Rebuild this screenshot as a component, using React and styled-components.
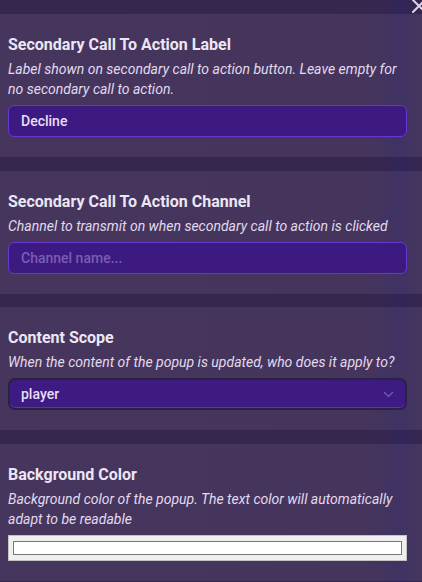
import React from "react";
import styled, { createGlobalStyle } from "styled-components";

const GlobalStyle = createGlobalStyle`
  html, body {
    margin: 0;
    padding: 0;
    background: #36274e;
    font-family: Roboto, "Noto Sans", sans-serif;
  }
  * {
    box-sizing: border-box;
  }
`;

const Panel = styled.div`
  position: relative;
  width: 422px;
  height: 582px;
  overflow: hidden;
  background: linear-gradient(90deg, #36274e 0%, #36274e 90%, #31265a 95%, #36274e 100%);
  padding-top: 14px;
  display: flex;
  flex-direction: column;
  gap: 13.5px;
`;

const CloseButton = styled.button`
  position: absolute;
  top: -3px;
  right: -6px;
  width: 18px;
  height: 18px;
  padding: 0;
  border: none;
  background: transparent;
  color: #ddd4ea;
  cursor: pointer;
  svg {
    display: block;
  }
`;

const Card = styled.section`
  background: linear-gradient(
    90deg,
    #46365d 0%,
    #45355d 88%,
    #403263 94%,
    #45365e 100%
  );
  padding: 21px 15px 20px 8px;
  display: flex;
  flex-direction: column;
`;

const Title = styled.h3`
  margin: 0;
  font-size: 16px;
  line-height: 20px;
  font-weight: 700;
  color: #ece6f4;
`;

const Description = styled.p`
  margin: 4px 0 6px;
  font-size: 14px;
  line-height: 20px;
  font-style: italic;
  color: #e2daee;
`;

const TextInput = styled.input`
  width: 100%;
  height: 32px;
  padding: 0 12px;
  border-radius: 6px;
  border: 1px solid #6638cf;
  background: #3d1a82;
  color: #e8def7;
  font-family: Roboto, "Noto Sans", sans-serif;
  font-size: 14px;
  font-weight: 500;
  outline: none;
  &::placeholder {
    color: #7a5db5;
  }
`;

const SelectBox = styled.div`
  height: 32px;
  border-radius: 7px;
  border: 2px solid #2b2140;
  background: #3e1a83;
  box-shadow: inset 0 -1px 0 #5a34b8;
  display: flex;
  align-items: center;
  justify-content: space-between;
  padding: 0 11px 0 11px;
  color: #e8def7;
  font-size: 14px;
  font-weight: 500;
  svg {
    color: #7a5db8;
  }
`;

const ColorInput = styled.input`
  width: 100%;
  height: 26px;
  margin: 0;
  padding: 5px 4px;
  background: #efefef;
  border: 1px solid #c4c4c4;
  border-radius: 0;
  cursor: pointer;
  &::-webkit-color-swatch-wrapper {
    padding: 0;
  }
  &::-webkit-color-swatch {
    border: 1px solid #777777;
    border-radius: 0;
  }
`;

const Field = ({ title, description, children }) => (
  <Card>
    <Title>{title}</Title>
    <Description>{description}</Description>
    {children}
  </Card>
);

export default function App() {
  return (
    <>
      <GlobalStyle />
      <Panel>
        <CloseButton aria-label="Close">
          <svg width="18" height="18" viewBox="0 0 18 18" fill="none">
            <path
              d="M3 3L15 15M15 3L3 15"
              stroke="currentColor"
              strokeWidth="2"
              strokeLinecap="round"
            />
          </svg>
        </CloseButton>

        <Field
          title="Secondary Call To Action Label"
          description="Label shown on secondary call to action button. Leave empty for no secondary call to action."
        >
          <TextInput defaultValue="Decline" />
        </Field>

        <Field
          title="Secondary Call To Action Channel"
          description="Channel to transmit on when secondary call to action is clicked"
        >
          <TextInput placeholder="Channel name..." />
        </Field>

        <Field
          title="Content Scope"
          description="When the content of the popup is updated, who does it apply to?"
        >
          <SelectBox>
            <span>player</span>
            <svg width="11" height="7" viewBox="0 0 11 7" fill="none">
              <path
                d="M1 1L5.5 5.5L10 1"
                stroke="currentColor"
                strokeWidth="1.2"
              />
            </svg>
          </SelectBox>
        </Field>

        <Field
          title="Background Color"
          description="Background color of the popup. The text color will automatically adapt to be readable"
        >
          <ColorInput type="color" defaultValue="#ffffff" />
        </Field>
      </Panel>
    </>
  );
}
